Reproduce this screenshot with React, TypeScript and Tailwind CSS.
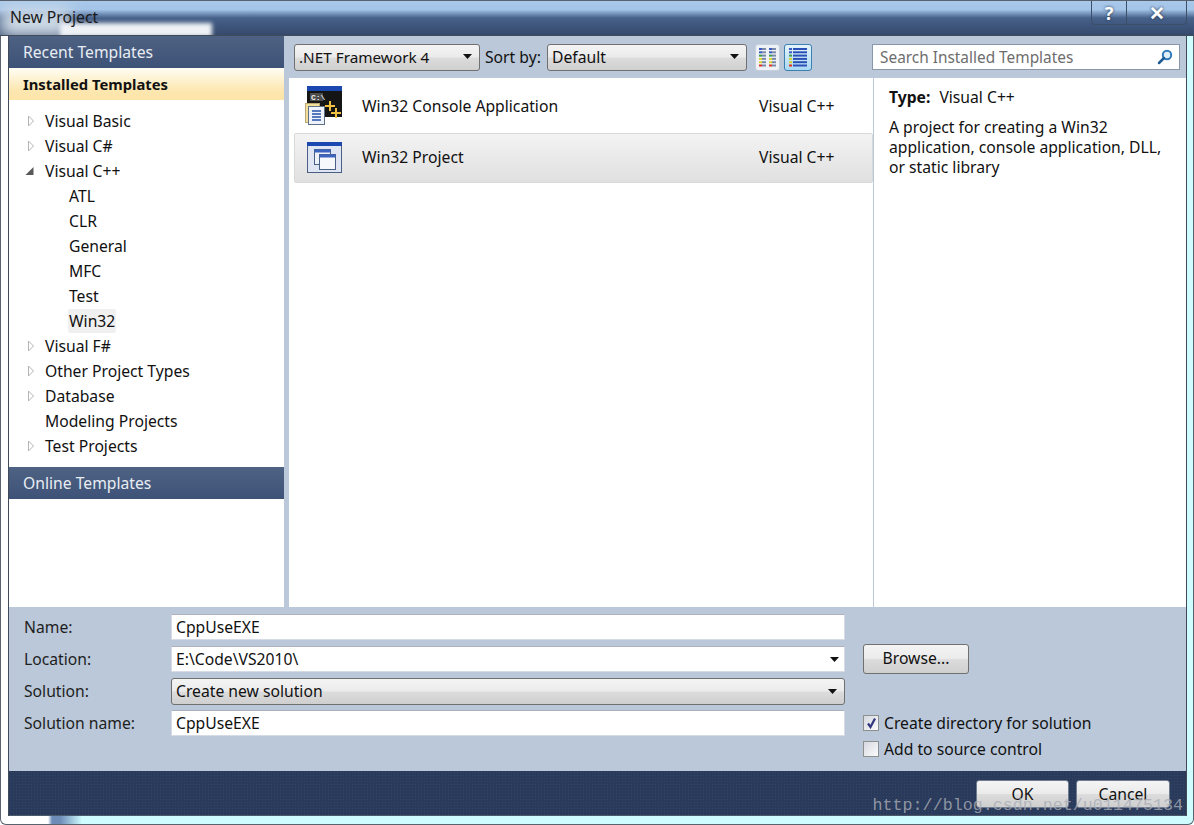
import type { ReactNode } from "react";

const treeItems = [
  { label: "Visual Basic", arrow: "closed" },
  { label: "Visual C#", arrow: "closed" },
  { label: "Visual C++", arrow: "open" },
  { label: "ATL", child: true },
  { label: "CLR", child: true },
  { label: "General", child: true },
  { label: "MFC", child: true },
  { label: "Test", child: true },
  { label: "Win32", child: true, selected: true },
  { label: "Visual F#", arrow: "closed" },
  { label: "Other Project Types", arrow: "closed" },
  { label: "Database", arrow: "closed" },
  { label: "Modeling Projects" },
  { label: "Test Projects", arrow: "closed" },
];

function Arrow({ kind }: { kind?: string }) {
  if (kind === "open") {
    return (
      <svg width="10" height="10" viewBox="0 0 10 10" className="shrink-0">
        <path d="M8.500 1V9H0.500Z" fill="#595959" />
      </svg>
    );
  }
  if (kind === "closed") {
    return (
      <svg width="10" height="12" viewBox="0 0 10 12" className="shrink-0">
        <path d="M3.500 1L8.500 6L3.500 11Z" fill="#fff" stroke="#b4b4b4" />
      </svg>
    );
  }
  return <span className="w-[10px]" />;
}

function Caret({ size = 9 }: { size?: number }) {
  return (
    <svg width={size} height="5" viewBox="0 0 9 5" className="shrink-0">
      <path d="M0 0H9L4.500 5Z" fill="#111" />
    </svg>
  );
}

function DropDown({ label, className }: { label: string; className: string }) {
  return (
    <div
      className={`flex items-center justify-between rounded-[3px] border border-[#707070] bg-[linear-gradient(#f4f4f4_0%,#ebebeb_48%,#dcdcdc_52%,#cfcfcf_100%)] pb-[1px] pl-[4px] pr-[7px] ${className}`}
    >
      <span>{label}</span>
      <Caret />
    </div>
  );
}

function TextField({ children, className = "" }: { children?: ReactNode; className?: string }) {
  return (
    <div
      className={`flex h-[26px] w-[674px] items-center justify-between rounded-[1px] border border-[#d4dbe4] border-t-[#abb2bb] bg-white pl-[4px] pr-[5px] ${className}`}
    >
      {children}
    </div>
  );
}

function ConsoleIcon() {
  return (
    <svg width="37" height="40" viewBox="0 0 37 40" className="shrink-0">
      <rect x="2" y="0" width="35" height="31" fill="#151515" />
      <rect x="2" y="0" width="35" height="5" fill="#1a47b0" />
      <rect x="5" y="7" width="13" height="8" fill="#4d4d4d" />
      <text x="6" y="14" fontSize="8" fontFamily="Liberation Mono, monospace" fontWeight="700" fill="#eee">
        C:\
      </text>
      <path d="M25 15v10M20 20h10M31 22v10M26 27h10" stroke="#f0c040" strokeWidth="2" />
      <rect x="0.500" y="17.500" width="14" height="19" fill="#f3df9c" stroke="#b9a977" />
      <rect x="3.500" y="20.500" width="16" height="18" fill="#eef3fb" stroke="#5f7088" />
      <path d="M7 25h9M7 28h9M7 31h9M7 34h9" stroke="#2450a8" strokeWidth="1.500" />
    </svg>
  );
}

function WindowIcon() {
  return (
    <svg width="35" height="31" viewBox="0 0 35 31" className="shrink-0">
      <rect x="0.500" y="0.500" width="34" height="30" fill="#dfe5f3" stroke="#4a5f86" />
      <rect x="0" y="0" width="35" height="4" fill="#1a47b0" />
      <rect x="7.500" y="7.500" width="16" height="15" fill="#eef1f9" stroke="#4a5f86" />
      <rect x="7.500" y="7.500" width="16" height="3" fill="#3c63c0" />
      <rect x="12.500" y="12.500" width="16" height="15" fill="#f7f8fc" stroke="#4a5f86" />
      <rect x="12.500" y="12.500" width="16" height="3" fill="#3c63c0" />
    </svg>
  );
}

function ViewIcon({ rows }: { rows?: boolean }) {
  const colors = ["#3b5bc0", "#3b5bc0", "#3b9a50", "#d8d030", "#d8d030", "#e03020"];
  return (
    <svg width="20" height="21" viewBox="0 0 20 21">
      {colors.map((c, i) => (
        <g key={i}>
          <rect x="1" y={1 + i * 3.300} width="3" height="2" fill={c} />
          {rows ? (
            <rect x="5" y={1 + i * 3.300} width="14" height="2" fill="#2a4fb5" />
          ) : (
            <>
              <rect x="4" y={1 + i * 3.300} width="4" height="2" fill="#7a8aa8" />
              <rect x="11" y={1 + i * 3.300} width="3" height="2" fill={c} />
              <rect x="14" y={1 + i * 3.300} width="4" height="2" fill="#7a8aa8" />
            </>
          )}
        </g>
      ))}
    </svg>
  );
}

function FormRow({ label, children, lift }: { label: string; children: ReactNode; lift?: boolean }) {
  return (
    <div className="flex items-center">
      <span className={`w-[147px] text-[#1e1e1e] ${lift ? "pb-[2px]" : ""}`}>{label}</span>
      {children}
    </div>
  );
}

function CheckBox({ checked, label }: { checked?: boolean; label: string }) {
  return (
    <div className="flex h-[26px] items-center gap-[5px]">
      <span className="flex h-[16px] w-[16px] items-center justify-center border border-[#8e8f8f] bg-[linear-gradient(135deg,#d5d9e0,#fbfbfc)]">
        {checked && (
          <svg width="11" height="12" viewBox="0 0 11 12">
            <path d="M2 6.500L4.500 10L9 1.500" fill="none" stroke="#31377f" strokeWidth="2.200" />
          </svg>
        )}
      </span>
      <span>{label}</span>
    </div>
  );
}

function FooterButton({ label, className }: { label: string; className: string }) {
  return (
    <div
      className={`flex h-[28px] items-center justify-center rounded-[3px] border border-[#6f7b8f] bg-[linear-gradient(#f4f4f4_0%,#ebebeb_48%,#dcdcdc_52%,#cfcfcf_100%)] ${className}`}
    >
      {label}
    </div>
  );
}

export default function App() {
  return (
    <div className="relative h-[825px] w-[1194px] overflow-hidden rounded-b-[6px] bg-[linear-gradient(90deg,#fff_0,#fff_48px,#6d8cb8_52px,#6d8cb8_60px,#cffcff_82px)] font-['Noto_Sans',sans-serif] text-[15.700px] leading-[20px] text-[#111] shadow-[inset_0_0_0_1px_#59636e]">
      {/* glass title bar */}
      <div className="relative flex h-[36px] items-center justify-between overflow-hidden border-y border-t-[#59636e] border-b-[#404a58] bg-[linear-gradient(#a9c8ea_0%,#a4c4e8_25%,#46618a_50%,#35496c_100%)] pl-[10px] pr-[7px]">
        <div className="absolute left-0 top-[6px] h-[30px] w-[70px] bg-[#d0dce8] blur-[8px]" />
        <div className="absolute left-[60px] top-[22px] h-[14px] w-[152px] bg-[#eef2f6] blur-[2px]" />
        <span className="relative pb-[2px] text-[#1a1a1a]">New Project</span>
        <div className="relative flex h-[24px] self-start rounded-b-[4px] border border-t-0 border-[#3d4e68] text-white">
          <div className="flex w-[35px] items-center justify-center border-r border-[#3d4e68] text-[18px] font-bold [text-shadow:0_0_3px_#20304a]">
            ?
          </div>
          <div className="flex w-[59px] items-center justify-center text-[19px] font-bold [text-shadow:0_0_3px_#20304a]">
            ✕
          </div>
        </div>
      </div>

      {/* client area */}
      <div className="ml-[8px] mr-[7px] flex h-[780px] flex-col border border-y-0 border-[#404a58] bg-[#bac8d9]">
        <div className="flex min-h-0 flex-1">
          {/* template tree */}
          <div className="flex w-[275px] flex-col bg-white">
            <div className="flex h-[32px] items-center bg-[linear-gradient(#4e6283,#3d5277)] pl-[14px] text-[#e8edf3]">
              Recent Templates
            </div>
            <div className="flex h-[32px] items-center bg-[linear-gradient(#fffdf4,#fde7b0_70%,#fde4a8)] pl-[14px] text-[14.800px] font-bold">
              Installed Templates
            </div>
            <div className="flex flex-col pt-[8px]">
              {treeItems.map((item) => (
                <div key={item.label} className="flex h-[25px] items-center pl-[16px]">
                  <div className="flex w-[20px] justify-start">
                    {!item.child && <Arrow kind={item.arrow} />}
                  </div>
                  <span
                    className={
                      item.child
                        ? `ml-[23px] px-[1px] ${item.selected ? "rounded-[2px] bg-[#f0f0f0] py-[2px]" : ""}`
                        : ""
                    }
                  >
                    {item.label}
                  </span>
                </div>
              ))}
            </div>
            <div className="mt-[9px] flex h-[32px] items-center bg-[linear-gradient(#4e6283,#3d5277)] pl-[14px] text-[#e8edf3]">
              Online Templates
            </div>
          </div>

          {/* templates list and details */}
          <div className="ml-[5px] flex min-w-0 flex-1 flex-col">
            <div className="flex h-[42px] items-center pl-[5px] pr-[6px]">
              <DropDown label=".NET Framework 4" className="h-[27px] w-[186px] text-[15.300px]" />
              <span className="ml-[5px] w-[62px]">Sort by:</span>
              <DropDown label="Default" className="h-[27px] w-[200px]" />
              <div className="ml-[8px] flex h-[27px] w-[25px] items-center justify-center rounded-[3px] border border-[#c5cfdc] bg-[#eef2f6]">
                <ViewIcon />
              </div>
              <div className="ml-[4px] flex h-[27px] w-[28px] items-center justify-center rounded-[3px] border border-[#3c7fb1] bg-[linear-gradient(#e5f4fc,#a9d9f2)]">
                <ViewIcon rows />
              </div>
              <div className="ml-auto flex h-[26px] w-[308px] items-center justify-between border border-[#8a97a8] bg-white pl-[7px] pr-[6px] text-[#6d6d6d]">
                <span className="pt-[1px] text-[15.400px]">Search Installed Templates</span>
                <svg width="16" height="16" viewBox="0 0 16 16">
                  <circle cx="10" cy="6" r="4.200" fill="#dff0fb" stroke="#2f79b9" strokeWidth="2" />
                  <path d="M7 9L2 14" stroke="#1f5c94" strokeWidth="2.500" strokeLinecap="round" />
                </svg>
              </div>
            </div>
            <div className="flex min-h-0 flex-1 bg-white">
              <div className="w-[585px] border-r border-[#bac8d9] pl-[5px]">
                <div className="flex h-[55px] items-center pl-[11px]">
                  <ConsoleIcon />
                  <span className="ml-[20px] w-[397px]">Win32 Console Application</span>
                  <span>Visual C++</span>
                </div>
                <div className="flex h-[50px] items-center rounded-[2px] border border-[#d9d9d9] bg-[linear-gradient(#f3f3f3,#e0e0e0)] pb-[2px] pl-[12px]">
                  <WindowIcon />
                  <span className="ml-[20px] w-[397px]">Win32 Project</span>
                  <span>Visual C++</span>
                </div>
              </div>
              <div className="flex-1 pl-[15px] pt-[9px]">
                <p>
                  <b>Type:</b>
                  <span className="ml-[9px]">Visual C++</span>
                </p>
                <p className="mt-[10px] w-[285px]">
                  A project for creating a Win32 application, console application, DLL, or static library
                </p>
              </div>
            </div>
          </div>
        </div>

        {/* name and location form */}
        <div className="flex h-[164px] pl-[15px] pt-[7px]">
          <div className="flex flex-col gap-[6px]">
            <FormRow label="Name:">
              <TextField>CppUseEXE</TextField>
            </FormRow>
            <FormRow label="Location:">
              <TextField>
                E:\Code\VS2010\
                <Caret />
              </TextField>
            </FormRow>
            <FormRow label="Solution:" lift>
              <DropDown label="Create new solution" className="h-[27px] w-[674px]" />
            </FormRow>
            <FormRow label="Solution name:" lift>
              <TextField className="-mt-[1px] pb-[1px]">CppUseEXE</TextField>
            </FormRow>
          </div>
          <div className="ml-[18px] flex flex-col">
            <div className="mt-[30px] flex h-[30px] w-[106px] items-center justify-center rounded-[3px] border border-[#707070] bg-[linear-gradient(#f4f4f4_0%,#ebebeb_48%,#dcdcdc_52%,#cfcfcf_100%)] pb-[2px]">
              Browse...
            </div>
            <div className="mt-[36px]">
              <CheckBox checked label="Create directory for solution" />
              <CheckBox label="Add to source control" />
            </div>
          </div>
        </div>

        {/* dark footer */}
        <div className="flex h-[45px] justify-end gap-[7px] border-b border-[#4c5a6c] bg-[#2a3a5b] bg-[radial-gradient(#34456a_1px,transparent_1px)] bg-[length:3px_3px] pr-[16px] pt-[9px]">
          <FooterButton label="OK" className="w-[93px]" />
          <FooterButton label="Cancel" className="w-[94px]" />
        </div>
      </div>

      <div className="absolute right-[11px] top-[796px] font-['Liberation_Mono',monospace] text-[16.700px] leading-[20px] text-[#a9adb5]/80">
        http://blog.csdn.net/u011475134
      </div>
    </div>
  );
}
